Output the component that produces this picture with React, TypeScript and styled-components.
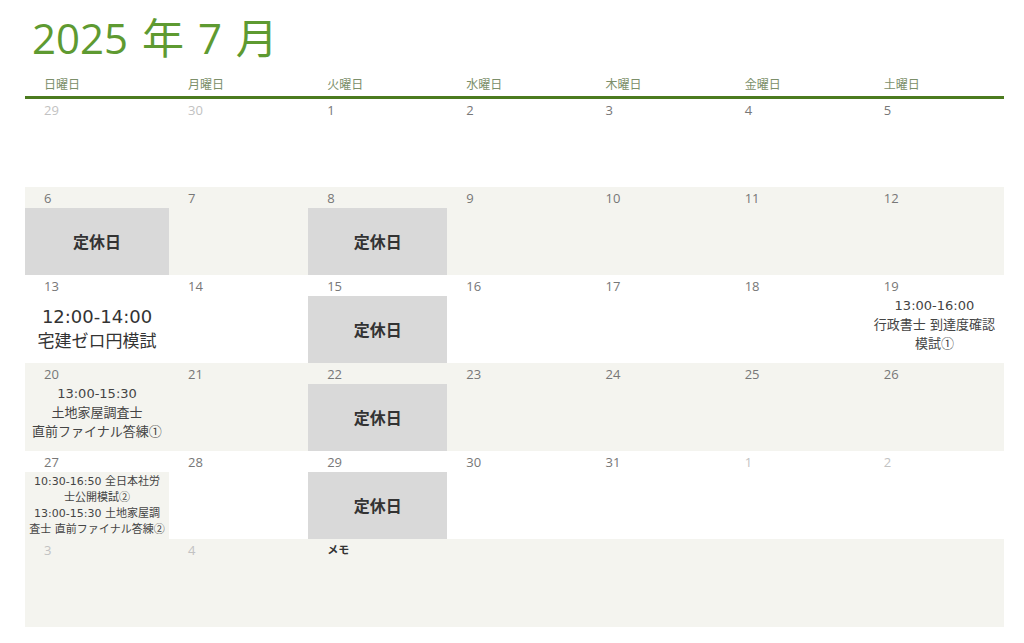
import styled, { createGlobalStyle } from 'styled-components';

type Event =
    | { kind: 'holiday' }
    | { kind: 'big'; time: string; title: string }
    | { kind: 'text'; lines: string[] }
    | { kind: 'box'; lines: string[] };

interface Day {
    n: number;
    other?: boolean;
    event?: Event;
}

const GlobalStyle = createGlobalStyle`
    html, body {
        margin: 0;
        padding: 0;
        background: #ffffff;
        font-family: 'Open Sans', 'Noto Sans CJK JP', sans-serif;
    }
`;

const EVENT_FONT = `'DejaVu Sans', 'Noto Sans CJK JP', sans-serif`;

const WEEK = ['日曜日', '月曜日', '火曜日', '水曜日', '木曜日', '金曜日', '土曜日'];

const holiday: Event = { kind: 'holiday' };

const weeks: Day[][] = [
    [{ n: 29, other: true }, { n: 30, other: true }, { n: 1 }, { n: 2 }, { n: 3 }, { n: 4 }, { n: 5 }],
    [{ n: 6, event: holiday }, { n: 7 }, { n: 8, event: holiday }, { n: 9 }, { n: 10 }, { n: 11 }, { n: 12 }],
    [
        { n: 13, event: { kind: 'big', time: '12:00-14:00', title: '宅建ゼロ円模試' } },
        { n: 14 },
        { n: 15, event: holiday },
        { n: 16 },
        { n: 17 },
        { n: 18 },
        { n: 19, event: { kind: 'text', lines: ['13:00-16:00', '行政書士 到達度確認模試①'] } },
    ],
    [
        { n: 20, event: { kind: 'text', lines: ['13:00-15:30', '土地家屋調査士', '直前ファイナル答練①'] } },
        { n: 21 },
        { n: 22, event: holiday },
        { n: 23 },
        { n: 24 },
        { n: 25 },
        { n: 26 },
    ],
    [
        {
            n: 27,
            event: {
                kind: 'box',
                lines: ['10:30-16:50 全日本社労', '士公開模試②', '13:00-15:30 土地家屋調', '査士 直前ファイナル答練②'],
            },
        },
        { n: 28 },
        { n: 29, event: holiday },
        { n: 30 },
        { n: 31 },
        { n: 1, other: true },
        { n: 2, other: true },
    ],
];

// circled numbers come from the CJK font so they match the reference size
function Label({ text }: { text: string }) {
    return (
        <>
            {text.split(/([\u2460-\u2473])/).map((part, i) =>
                /[\u2460-\u2473]/.test(part) ? <Circled key={i}>{part}</Circled> : part
            )}
        </>
    );
}

function EventBody({ event }: { event: Event }) {
    switch (event.kind) {
        case 'holiday':
            return <Holiday>定休日</Holiday>;
        case 'big':
            return (
                <BigEvent>
                    <span>{event.time}</span>
                    <small>{event.title}</small>
                </BigEvent>
            );
        case 'text':
            return (
                <TextEvent>
                    {event.lines.map((l) => (
                        <div key={l}>
                            <Label text={l} />
                        </div>
                    ))}
                </TextEvent>
            );
        case 'box':
            return (
                <BoxEvent>
                    {event.lines.map((l) => (
                        <div key={l}>
                            <Label text={l} />
                        </div>
                    ))}
                </BoxEvent>
            );
    }
}

export default function App() {
    return (
        <>
            <GlobalStyle />
            <Page>
                <Title>2025 年 7 月</Title>
                <Calendar>
                    <HeadRow>
                        {WEEK.map((w) => (
                            <HeadCell key={w}>{w}</HeadCell>
                        ))}
                    </HeadRow>
                    {weeks.map((week, i) => (
                        <Week key={i} $striped={i % 2 === 1}>
                            {week.map((d, j) => (
                                <Cell key={j}>
                                    <DayNum $other={d.other}>{d.n}</DayNum>
                                    {d.event && <EventBody event={d.event} />}
                                </Cell>
                            ))}
                        </Week>
                    ))}
                    <Week $striped>
                        <Cell>
                            <DayNum $other>3</DayNum>
                        </Cell>
                        <Cell>
                            <DayNum $other>4</DayNum>
                        </Cell>
                        <MemoCell>メモ</MemoCell>
                    </Week>
                </Calendar>
            </Page>
        </>
    );
}

const Page = styled.div`
    width: 1024px;
    height: 643px;
    padding: 0 20px 0 25px;
    box-sizing: border-box;
`;

const Title = styled.h1`
    margin: 0;
    padding: 10px 0 0 7px;
    height: 75px;
    box-sizing: border-box;
    font-size: 42px;
    line-height: 56px;
    font-weight: 400;
    word-spacing: 3px;
    color: #5e9a31;
`;

const Calendar = styled.div`
    display: flex;
    flex-direction: column;
    width: 979px;
`;

const cols = `
    display: grid;
    grid-template-columns: 144px repeat(6, 1fr);
`;

const HeadRow = styled.div`
    ${cols}
    height: 21px;
    border-bottom: 3px solid #4b7b1f;
`;

const HeadCell = styled.div`
    padding-left: 19px;
    font-size: 12px;
    line-height: 20px;
    color: #7c8f6a;
`;

const Week = styled.div<{ $striped?: boolean }>`
    ${cols}
    height: 88px;
    background: ${(p) => (p.$striped ? '#f4f4ef' : '#ffffff')};
`;

const Cell = styled.div`
    display: flex;
    flex-direction: column;
    min-width: 0;
    overflow: hidden;
`;

const DayNum = styled.div<{ $other?: boolean }>`
    padding: 2px 0 0 19px;
    height: 21px;
    box-sizing: border-box;
    font-size: 13px;
    line-height: 18px;
    color: ${(p) => (p.$other ? '#c2c2c2' : '#777777')};
`;

const Holiday = styled.div`
    flex: 1;
    display: flex;
    align-items: center;
    justify-content: center;
    padding-bottom: 2px;
    background: #d9d9d9;
    font-size: 16px;
    font-weight: 700;
    color: #333333;
`;

const BigEvent = styled.div`
    display: flex;
    flex-direction: column;
    align-items: center;
    padding-top: 8px;
    color: #333333;
    font-family: ${EVENT_FONT};

    span {
        font-size: 18px;
        line-height: 25px;
    }

    small {
        font-size: 17px;
        line-height: 25px;
    }
`;

const TextEvent = styled.div`
    text-align: center;
    padding: 0 4px;
    font-family: ${EVENT_FONT};
    font-size: 13px;
    line-height: 19px;
    color: #444444;
`;

const BoxEvent = styled.div`
    flex: 1;
    padding: 2px 0 0;
    background: #f4f4ef;
    text-align: center;
    white-space: nowrap;
    font-family: ${EVENT_FONT};
    font-size: 11px;
    line-height: 16px;
    color: #444444;
`;

const Circled = styled.span`
    font-family: 'Noto Sans CJK JP', sans-serif;
    line-height: 1;
`;

const MemoCell = styled.div`
    grid-column: 3 / 8;
    padding: 3px 0 0 19px;
    font-size: 11px;
    font-weight: 700;
    line-height: 16px;
    color: #333333;
`;
